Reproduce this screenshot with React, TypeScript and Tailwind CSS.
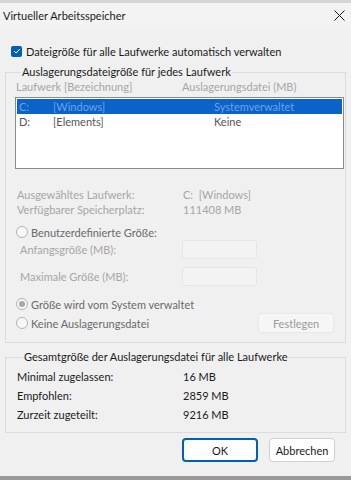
const font = { fontFamily: 'Lato, "Noto Sans", sans-serif' };

function Radio({ checked }: { checked?: boolean }) {
  return (
    <span className="flex h-[12px] w-[12px] shrink-0 items-center justify-center rounded-full border border-[#b4b4b4] bg-[#f7f7f7]">
      {checked && <span className="h-[6px] w-[6px] rounded-full bg-[#a8a8a8]" />}
    </span>
  );
}

export default function App() {
  const drives = [
    { letter: 'C:', label: '[Windows]', size: 'Systemverwaltet', selected: true },
    { letter: 'D:', label: '[Elements]', size: 'Keine', selected: false },
  ];

  const totals = [
    { label: 'Minimal zugelassen:', value: '16 MB' },
    { label: 'Empfohlen:', value: '2859 MB' },
    { label: 'Zurzeit zugeteilt:', value: '9216 MB' },
  ];

  return (
    <div className="flex h-[480px] w-[351px] flex-col bg-[#f0f0f0] text-[11px] leading-[15px] text-[#1b1b1b]" style={font}>
      {/* strip of the window behind */}
      <div className="h-[3px] bg-[#d6d6d6]" />

      {/* Title bar */}
      <div className="flex h-[24px] items-center justify-between bg-[#f3f3f3] pl-[3px] pr-[6px]">
        <span>Virtueller Arbeitsspeicher</span>
        <svg width="11" height="11" viewBox="0 0 11 11" className="text-[#1b1b1b]">
          <path d="M0.5 0.5L10.5 10.5M10.5 0.5L0.5 10.5" stroke="currentColor" strokeWidth="1" />
        </svg>
      </div>

      {/* Auto checkbox */}
      <div className="mt-[18px] flex h-[12px] items-center gap-[4px] pl-[11px]">
        <span className="flex h-[11px] w-[11px] items-center justify-center rounded-[2px] bg-[#005fb8]">
          <svg width="8" height="8" viewBox="0 0 8 8">
            <path d="M1.2 4.2L3.1 6L6.8 2" fill="none" stroke="white" strokeWidth="1" />
          </svg>
        </span>
        <span>Dateigröße für alle Laufwerke automatisch verwalten</span>
      </div>

      {/* Group 1 */}
      <fieldset className="mx-[5px] mt-[7px] border border-[#dcdcdc] pb-[9px] pl-[9px] pr-[1px]">
        <legend className="ml-[6px] h-[16px] px-[1px] leading-[16px]">Auslagerungsdateigröße für jedes Laufwerk</legend>

        <div className="flex h-[13px] items-center pl-[1px] leading-[13px] text-[#a6a6a6]">
          <span className="w-[166px]">Laufwerk [Bezeichnung]</span>
          <span>Auslagerungsdatei (MB)</span>
        </div>

        <div className="mt-[4px] h-[72px] border border-[#8a8a8a] bg-white p-[1px]">
          {drives.map((d) => (
            <div
              key={d.letter}
              className={
                d.selected
                  ? 'flex h-[15px] items-center bg-[#0a63c9] pl-[2px] text-[#6ea2e6]'
                  : 'flex h-[15px] items-center pl-[2px] text-[#555555]'
              }
            >
              <span className="w-[34px]">{d.letter}</span>
              <span className="w-[161px]">{d.label}</span>
              <span>{d.size}</span>
            </div>
          ))}
        </div>

        <div className="mt-[18px] flex h-[15px] items-center pl-[2px] text-[#a6a6a6]">
          <span className="w-[166px]">Ausgewähltes Laufwerk:</span>
          <span>C:&nbsp;&nbsp;[Windows]</span>
        </div>
        <div className="flex h-[15px] items-center pl-[2px] text-[#a6a6a6]">
          <span className="w-[166px]">Verfügbarer Speicherplatz:</span>
          <span>111408 MB</span>
        </div>

        <div className="mt-[7px] flex h-[16px] items-center gap-[3px] pl-[1px] text-[#6a6a6a]">
          <Radio />
          <span>Benutzerdefinierte Größe:</span>
        </div>

        <div className="flex h-[19px] items-center pl-[5px] text-[#a6a6a6]">
          <span className="w-[162px]">Anfangsgröße (MB):</span>
          <span className="h-[19px] w-[75px] rounded-[3px] border border-[#e6e6e6] bg-[#f3f3f3]" />
        </div>
        <div className="mt-[8px] flex h-[19px] items-center pl-[5px] text-[#a6a6a6]">
          <span className="w-[162px]">Maximale Größe (MB):</span>
          <span className="h-[19px] w-[75px] rounded-[3px] border border-[#e6e6e6] bg-[#f3f3f3]" />
        </div>

        <div className="mt-[10px] flex h-[16px] items-center gap-[3px] pl-[1px] text-[#6a6a6a]">
          <Radio checked />
          <span>Größe wird vom System verwaltet</span>
        </div>
        <div className="mt-[1px] flex h-[20px] items-center justify-between pl-[1px] pr-[10px] text-[#6a6a6a]">
          <div className="flex items-center gap-[3px]">
            <Radio />
            <span>Keine Auslagerungsdatei</span>
          </div>
          <span className="flex h-[20px] w-[76px] items-center justify-center rounded-[3px] border border-[#e8e8e8] bg-[#f6f6f6] text-[#9a9a9a]">
            Festlegen
          </span>
        </div>
      </fieldset>

      {/* Group 2 */}
      <fieldset className="mx-[5px] mt-[6px] border border-[#dcdcdc] pb-[8px] pl-[11px]">
        <legend className="ml-[6px] h-[16px] px-[1px] leading-[16px]">Gesamtgröße der Auslagerungsdatei für alle Laufwerke</legend>
        <div className="mt-[2px]">
          {totals.map((t) => (
            <div key={t.label} className="flex h-[19px] items-center">
              <span className="w-[166px]">{t.label}</span>
              <span>{t.value}</span>
            </div>
          ))}
        </div>
      </fieldset>

      {/* Buttons */}
      <div className="mt-[5px] flex justify-end gap-[11px] pr-[16px]">
        <button className="h-[24px] w-[76px] rounded-[4px] border-2 border-[#005fb8] bg-white">OK</button>
        <button className="h-[24px] w-[66px] rounded-[4px] border border-[#d0d0d0] bg-white">Abbrechen</button>
      </div>

      <div className="flex-1" />
      <div className="h-[4px] bg-[#9a9a9a]" />
    </div>
  );
}
